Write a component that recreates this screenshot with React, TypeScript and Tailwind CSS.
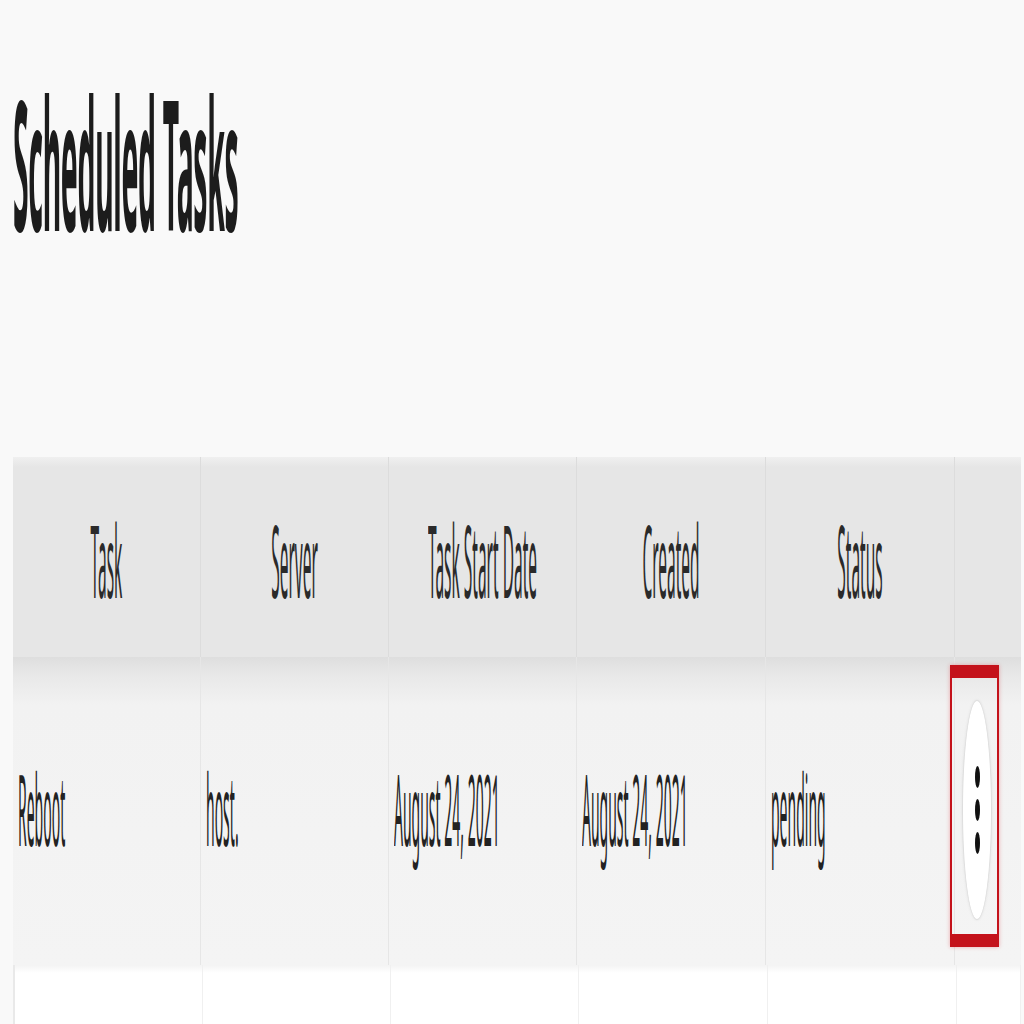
import React from "react";

const headers = ["Task", "Server", "Task Start Date", "Created", "Status", ""];
const row = ["Reboot", "host.", "August 24, 2021", "August 24, 2021", "pending"];

function Stretch({ children, className = "" }: { children: React.ReactNode; className?: string }) {
  return <span className={`inline-block origin-center whitespace-nowrap leading-none ${className}`}>{children}</span>;
}

export default function App() {
  return (
    <div className="min-h-screen w-full overflow-hidden bg-[#f9f9f9] font-['Noto_Sans',sans-serif] text-[#222] antialiased">
      <div className="flex h-[326px] items-center pl-[13px] pb-[2px]">
        <Stretch className="scale-y-[6.4] text-[28.4px] font-bold tracking-[-0.3px] text-[#1c1c1c]">Scheduled Tasks</Stretch>
      </div>
      <div className="h-[131px]" />
      <div className="ml-[13px] w-[1008px]">
        <div className="grid h-[200px] grid-cols-[188px_188px_188px_189px_189px_1fr] bg-[linear-gradient(to_bottom,#f0f0f0_0px,#e6e6e6_10px,#e6e6e6_100%)]">
          {headers.map((h, i) => (
            <div key={i} className="flex items-center justify-center border-r border-[#dcdcdc] pt-[14px] last:border-r-0">
              {h && <Stretch className="scale-y-[6.5] text-[15.5px] text-[#2a2a2a]">{h}</Stretch>}
            </div>
          ))}
        </div>
        <div className="grid h-[308px] grid-cols-[188px_188px_188px_189px_189px_1fr] bg-[linear-gradient(to_bottom,#dedede_0px,#e8e8e8_18px,#f2f2f2_48px,#f4f4f4_100%)]">
          {row.map((c, i) => (
            <div key={i} className="flex items-center border-r border-[#e6e6e6] pl-[5px]">
              <Stretch className="scale-y-[7] text-[14px] text-[#222]">{c}</Stretch>
            </div>
          ))}
          <div className="flex items-start pl-[7px] pt-[43px]">
            <div className="relative">
              <div className="flex h-[220px] w-[30px] flex-col items-center justify-center gap-[11px] rounded-[50%] border border-[#dedede] bg-white shadow-[0_0_3px_rgba(0,0,0,0.08)]">
                <span className="h-[22px] w-[5px] rounded-[50%] bg-[#111]" />
                <span className="h-[22px] w-[5px] rounded-[50%] bg-[#111]" />
                <span className="h-[22px] w-[5px] rounded-[50%] bg-[#111]" />
              </div>
              <div className="pointer-events-none absolute -top-[35px] -bottom-[27px] -left-[12px] -right-[7px] border-x-2 border-y-[13px] border-[#c4121b] shadow-[0_0_4px_rgba(220,30,40,0.35)]" />
            </div>
          </div>
        </div>
        <div className="grid h-[59px] grid-cols-[188px_188px_188px_189px_189px_1fr] border-l-2 border-[#e9e9e9] bg-[linear-gradient(to_bottom,#f3f3f3_0px,#ffffff_8px,#ffffff_100%)]">
          {headers.map((_, i) => (
            <div key={i} className="border-r border-[#f0f0f0]" />
          ))}
        </div>
      </div>
    </div>
  );
}
